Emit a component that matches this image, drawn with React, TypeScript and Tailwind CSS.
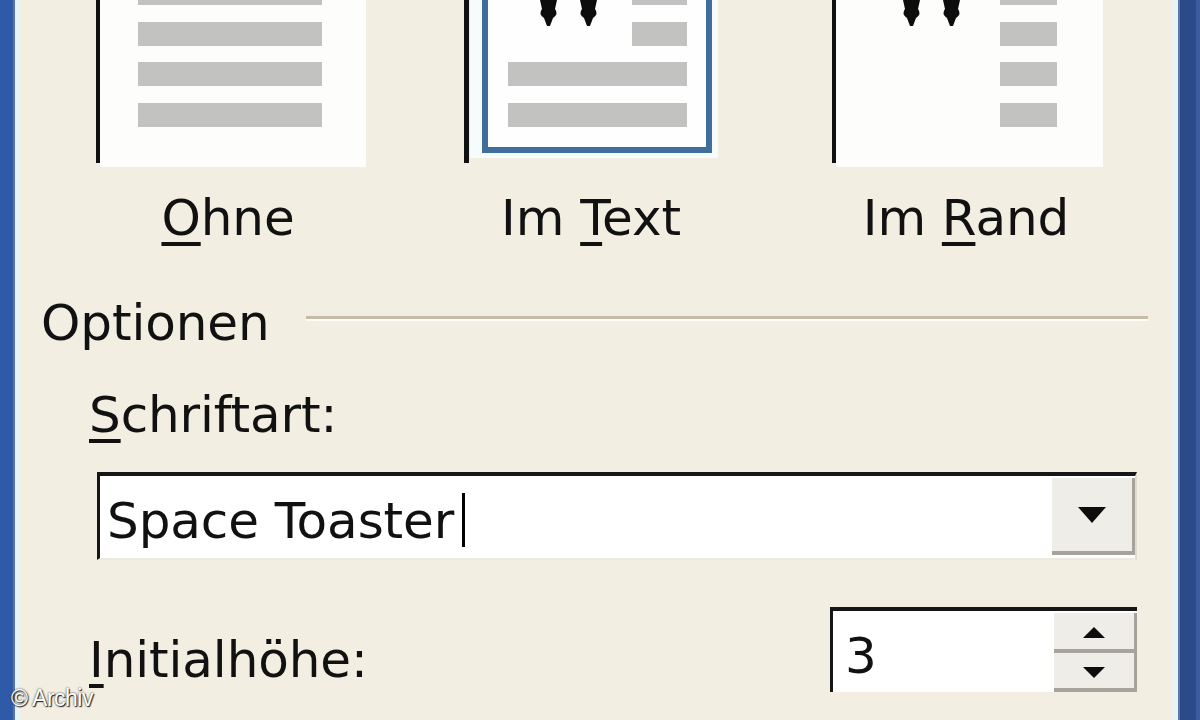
import React from 'react';

function Bar({ x, y, w }: { x: number; y: number; w: number }) {
  return <rect x={x} y={y} width={w} height={24} fill="#c2c2c0" />;
}

// bottom ends of the decorative drop-cap letter
function Legs({ x }: { x: number }) {
  const leg = (lx: number) =>
    `M${lx} 0 H${lx + 17} L${lx + 15} 9 Q${lx + 19} 14 ${lx + 13} 18 L${lx + 10} 26 H${lx + 7} L${lx + 4} 18 Q${lx - 2} 14 ${lx + 2} 9 Z`;
  return (
    <g fill="#0d0d0d">
      <path d={leg(x)} />
      <path d={leg(x + 40)} />
    </g>
  );
}

function IconOhne() {
  return (
    <svg width="272" height="170" className="block">
      <rect x="4" y="0" width="266" height="167" fill="#fdfdfb" />
      <rect x="0" y="0" width="4" height="163" fill="#111" />
      <Bar x={42} y={-19} w={184} />
      <Bar x={42} y={22} w={184} />
      <Bar x={42} y={62} w={184} />
      <Bar x={42} y={103} w={184} />
    </svg>
  );
}

function IconImText() {
  return (
    <svg width="272" height="170" className="block">
      <rect x="6" y="0" width="248" height="158" fill="#f6fbfc" />
      <rect x="0" y="0" width="5" height="163" fill="#111" />
      <rect x="21" y="-20" width="224" height="170" fill="#fefefe" stroke="#3f6d9c" strokeWidth="6" />
      <Legs x={76} />
      <Bar x={168} y={-19} w={55} />
      <Bar x={168} y={22} w={55} />
      <Bar x={44} y={62} w={179} />
      <Bar x={44} y={103} w={179} />
    </svg>
  );
}

function IconImRand() {
  return (
    <svg width="272" height="170" className="block">
      <rect x="4" y="0" width="267" height="167" fill="#fdfdfb" />
      <rect x="0" y="0" width="4" height="163" fill="#111" />
      <Legs x={71} />
      <Bar x={168} y={-19} w={57} />
      <Bar x={168} y={22} w={57} />
      <Bar x={168} y={62} w={57} />
      <Bar x={168} y={103} w={57} />
    </svg>
  );
}

function Key({ children }: { children: React.ReactNode }) {
  return <span className="underline decoration-[length:4px] underline-offset-[7px]">{children}</span>;
}

function Arrow({ up, w, h }: { up?: boolean; w: number; h: number }) {
  return (
    <svg width={w} height={h} className="block">
      <polygon points={up ? `0,${h} ${w},${h} ${w / 2},0` : `0,0 ${w},0 ${w / 2},${h}`} fill="#0d0d0d" />
    </svg>
  );
}

export default function App() {
  return (
    <div className="relative flex h-[720px] w-[1200px] overflow-hidden bg-[#f3eee2] font-['DejaVu_Sans',sans-serif] text-[50px] leading-[50px] tracking-[-0.1px] text-[#111]">
      {/* window frame left */}
      <div className="flex shrink-0">
        <div className="w-[13px] bg-[#2f5aa8]" />
        <div className="w-[2px] bg-[#5a76a0]" />
        <div className="w-[5px] bg-[#e5f4f7]" />
      </div>

      <div className="flex flex-1 flex-col">
        {/* Position */}
        <div className="flex gap-[96px] pl-[76px]">
          <div className="flex w-[272px] flex-col items-center">
            <IconOhne />
            <div className="mt-[23px] pr-2"><Key>O</Key>hne</div>
          </div>
          <div className="flex w-[272px] flex-col items-center">
            <IconImText />
            <div className="mt-[23px] pr-[18px]">Im <Key>T</Key>ext</div>
          </div>
          <div className="flex w-[272px] flex-col items-center">
            <IconImRand />
            <div className="mt-[23px] pr-1">Im <Key>R</Key>and</div>
          </div>
        </div>

        {/* Optionen */}
        <div className="mt-[55px] flex items-start pl-[21px]">
          <span>Optionen</span>
          <div className="ml-[36px] mr-[24px] mt-[18px] flex-1 border-t-[3px] border-b-2 border-t-[#c4bba9] border-b-[#fffdf8]" />
        </div>

        <div className="mt-[42px] pl-[69px]"><Key>S</Key>chriftart:</div>

        {/* Schriftart combo */}
        <div className="ml-[77px] mr-[35px] mt-[32px] flex h-[88px] border-t-[4px] border-l-[3px] border-r-[2px] border-b-[2px] border-t-[#161616] border-l-[#161616] border-r-[#dedbd2] border-b-[#ece9e0] bg-white">
          <div className="flex-1 pl-[7px] pt-[20px]">
            Space Toaster<span className="ml-[8px] inline-block h-[54px] w-[3px] translate-y-[-5px] bg-black align-middle" />
          </div>
          <div className="mb-[3px] mt-[2px] flex w-[83px] items-center justify-center border-r-[3px] border-b-[4px] border-r-[#a7a39b] border-b-[#a7a39b] bg-[#eeede8]">
            <Arrow w={28} h={16} />
          </div>
        </div>

        {/* Initialhöhe */}
        <div className="mt-[47px] flex items-start">
          <div className="mt-[28px] pl-[69px]"><Key>I</Key>nitialhöhe:</div>
          <div className="ml-auto mr-[35px] flex h-[85px] w-[307px] border-t-[4px] border-l-[3px] border-[#161616] bg-white">
            <div className="flex-1 pl-[12px] pt-[20px]">3</div>
            <div className="flex w-[83px] flex-col pt-[2px]">
              <div className="flex h-[40px] items-center justify-center border-b-[4px] border-r-[3px] border-[#a7a39b] bg-[#eeede8] pt-[4px]">
                <Arrow up w={22} h={11} />
              </div>
              <div className="flex h-[40px] items-center justify-center border-b-[4px] border-r-[3px] border-[#a7a39b] bg-[#eeede8] pt-[4px]">
                <Arrow w={22} h={11} />
              </div>
            </div>
          </div>
        </div>
      </div>

      {/* window frame right */}
      <div className="flex shrink-0">
        <div className="w-[6px] bg-[#e8f3f7]" />
        <div className="w-[2px] bg-[#5a78a8]" />
        <div className="w-[16px] bg-[#2a4a8a]" />
        <div className="w-[4px] bg-[#3b5da0]" />
      </div>

      <div className="absolute bottom-[10px] left-[11px] font-['Liberation_Sans',sans-serif] text-[23px] leading-[23px] tracking-[-0.5px] text-white [text-shadow:0_0_2px_#222,1px_1px_1px_#222]">
        © Archiv
      </div>
    </div>
  );
}
